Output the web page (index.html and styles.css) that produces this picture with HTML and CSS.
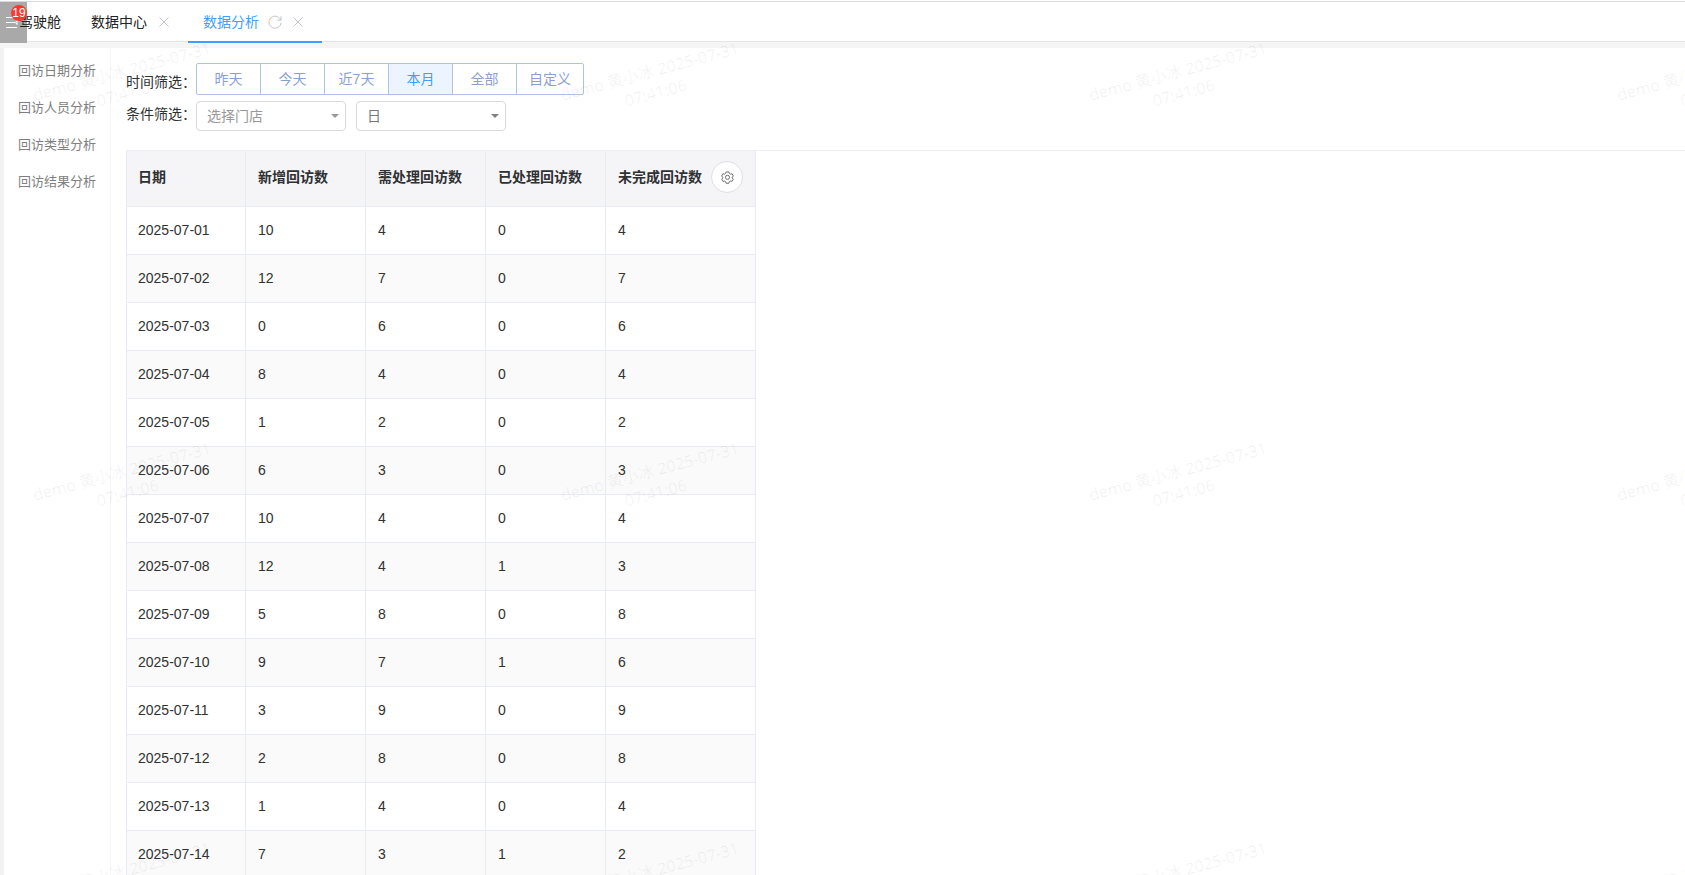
FILE: index.html
```
<!DOCTYPE html>
<html lang="zh-CN">
<head>
<meta charset="utf-8">
<title>数据分析</title>
<link rel="stylesheet" href="styles.css">
</head>
<body>
<header class="topbar">
  <button class="menu-btn" type="button" aria-label="菜单">
    <svg width="12" height="13" viewBox="0 0 12 13"><path d="M0 1.500h11M0 6.500h9M0 11.500h11M11 4.500v4L9.500 6.500z"/></svg>
    <span class="badge">19</span>
  </button>
  <nav class="tabs">
    <div class="tab tab-home"><a class="tab-link" href="#home">驾驶舱</a></div>
    <div class="tab">
      <a class="tab-link" href="#center">数据中心</a>
      <button class="tab-btn" type="button" aria-label="关闭数据中心"><svg width="10" height="10" viewBox="0 0 10 10"><path d="M.5.5l9 9M9.500.5l-9 9"/></svg></button>
    </div>
    <div class="tab tab-active">
      <a class="tab-link" href="#analysis">数据分析</a>
      <button class="tab-btn tab-refresh" type="button" aria-label="刷新"><svg width="14" height="14" viewBox="0 0 14 14"><path d="M12.600 5A6 6 0 1 0 13 7.600M13 1.200v4H9.200"/></svg></button>
      <button class="tab-btn" type="button" aria-label="关闭数据分析"><svg width="10" height="10" viewBox="0 0 10 10"><path d="M.5.5l9 9M9.500.5l-9 9"/></svg></button>
    </div>
  </nav>
</header>
<div class="layout">
  <nav class="sidebar">
    <a class="side-link" href="#date">回访日期分析</a>
    <a class="side-link" href="#staff">回访人员分析</a>
    <a class="side-link" href="#type">回访类型分析</a>
    <a class="side-link" href="#result">回访结果分析</a>
  </nav>
  <main class="content">
    <div class="filters">
      <div class="filter-row">
        <span class="filter-label" id="time-label">时间筛选：</span>
        <div class="range" role="group" aria-labelledby="time-label">
          <button class="range-btn" type="button">昨天</button>
          <button class="range-btn" type="button">今天</button>
          <button class="range-btn" type="button">近7天</button>
          <button class="range-btn range-on" type="button">本月</button>
          <button class="range-btn" type="button">全部</button>
          <button class="range-btn" type="button">自定义</button>
        </div>
      </div>
      <div class="filter-row filter-row-top">
        <label class="filter-label" for="store">条件筛选：</label>
        <div class="selects">
          <div class="select-box">
            <select class="select select-empty" id="store"><option>选择门店</option></select>
            <svg class="caret" width="8" height="4" viewBox="0 0 8 4"><path d="M0 0h8L4 4z"/></svg>
          </div>
          <div class="select-box">
            <select class="select" aria-label="统计周期"><option>日</option></select>
            <svg class="caret caret-dark" width="8" height="4" viewBox="0 0 8 4"><path d="M0 0h8L4 4z"/></svg>
          </div>
        </div>
      </div>
    </div>
    <div class="table-wrap">
      <table class="table">
        <colgroup><col class="col"><col class="col"><col class="col"><col class="col"><col class="col-last"></colgroup>
        <thead>
          <tr><th>日期</th><th>新增回访数</th><th>需处理回访数</th><th>已处理回访数</th><th><div class="th-last">未完成回访数
            <button class="gear" type="button" aria-label="列设置"><svg width="13" height="13" viewBox="0 0 14 14"><path d="M5.500 1h3l.5 1.700 1.200.7 1.700-.5 1.400 2.500-1.200 1.200v1l1.200 1.200-1.400 2.400-1.700-.4-1.200.7-.5 1.700h-3l-.5-1.700-1.200-.7-1.700.4L.7 8.800l1.200-1.200v-1L.7 5.400l1.400-2.500 1.700.5L5 2.700z"/><circle cx="7" cy="6.800" r="2.200"/></svg></button></div></th></tr>
        </thead>
        <tbody>
          <tr><td>2025-07-01</td><td>10</td><td>4</td><td>0</td><td>4</td></tr>
          <tr><td>2025-07-02</td><td>12</td><td>7</td><td>0</td><td>7</td></tr>
          <tr><td>2025-07-03</td><td>0</td><td>6</td><td>0</td><td>6</td></tr>
          <tr><td>2025-07-04</td><td>8</td><td>4</td><td>0</td><td>4</td></tr>
          <tr><td>2025-07-05</td><td>1</td><td>2</td><td>0</td><td>2</td></tr>
          <tr><td>2025-07-06</td><td>6</td><td>3</td><td>0</td><td>3</td></tr>
          <tr><td>2025-07-07</td><td>10</td><td>4</td><td>0</td><td>4</td></tr>
          <tr><td>2025-07-08</td><td>12</td><td>4</td><td>1</td><td>3</td></tr>
          <tr><td>2025-07-09</td><td>5</td><td>8</td><td>0</td><td>8</td></tr>
          <tr><td>2025-07-10</td><td>9</td><td>7</td><td>1</td><td>6</td></tr>
          <tr><td>2025-07-11</td><td>3</td><td>9</td><td>0</td><td>9</td></tr>
          <tr><td>2025-07-12</td><td>2</td><td>8</td><td>0</td><td>8</td></tr>
          <tr><td>2025-07-13</td><td>1</td><td>4</td><td>0</td><td>4</td></tr>
          <tr><td>2025-07-14</td><td>7</td><td>3</td><td>1</td><td>2</td></tr>
        </tbody>
      </table>
    </div>
  </main>
</div>
<div class="watermark" aria-hidden="true">
  <div class="marks">
    <span class="mark">demo 黄小冰 2025-07-31<br>07:41:06</span><span class="mark">demo 黄小冰 2025-07-31<br>07:41:06</span><span class="mark">demo 黄小冰 2025-07-31<br>07:41:06</span><span class="mark">demo 黄小冰 2025-07-31<br>07:41:06</span>
    <span class="mark">demo 黄小冰 2025-07-31<br>07:41:06</span><span class="mark">demo 黄小冰 2025-07-31<br>07:41:06</span><span class="mark">demo 黄小冰 2025-07-31<br>07:41:06</span><span class="mark">demo 黄小冰 2025-07-31<br>07:41:06</span>
    <span class="mark">demo 黄小冰 2025-07-31<br>07:41:06</span><span class="mark">demo 黄小冰 2025-07-31<br>07:41:06</span><span class="mark">demo 黄小冰 2025-07-31<br>07:41:06</span><span class="mark">demo 黄小冰 2025-07-31<br>07:41:06</span>
  </div>
</div>
</body>
</html>
```
FILE: styles.css
```
* { box-sizing: border-box; }
body {
  margin: 0;
  height: 100vh;
  overflow: hidden;
  display: flex;
  flex-direction: column;
  background: #fff;
  color: #303133;
  font: 14px/20px "Liberation Sans", "Noto Sans CJK SC", sans-serif;
}
a { color: inherit; text-decoration: none; }
button, select { font: inherit; color: inherit; margin: 0; }
svg { display: block; fill: none; stroke: currentColor; }

.topbar {
  position: relative;
  flex: none;
  padding-top: 1px;
  background: #fff;
  border-bottom: 6px solid #f5f5f5;
}
.tabs {
  display: flex;
  height: 41px;
  border-top: 1px solid #d9dadb;
  border-bottom: 1px solid #e6e6e6;
}
.tab {
  display: flex;
  align-items: center;
  height: 39px;
  padding: 0 19px 0 15px;
  gap: 12px;
  color: #222;
}
.tab-home { padding: 0 15px 0 19px; }
.tab-home .tab-link { position: relative; z-index: 1; }
.tab-active {
  height: 41px;
  color: #409eff;
  gap: 9px;
  border-bottom: 2px solid #409eff;
}
.tab-btn {
  padding: 0;
  border: 0;
  background: none;
  color: #c0c4cc;
}
.tab-refresh { margin-right: 2px; }
.menu-btn {
  position: absolute;
  left: 0;
  top: 2px;
  width: 27px;
  height: 41px;
  padding: 0 0 0 6px;
  border: 0;
  background: #a9a9a9;
  color: #fff;
}
.badge {
  position: absolute;
  z-index: 2;
  left: 11px;
  top: 3px;
  width: 16px;
  height: 16px;
  border-radius: 8px;
  background: #fa3a30;
  font-size: 12px;
  line-height: 16px;
  text-align: center;
}

.layout {
  flex: 1;
  min-height: 0;
  display: flex;
  border-left: 4px solid #f2f2f2;
}
.sidebar {
  flex: none;
  width: 107px;
  padding: 4px 14px;
  border-right: 1px solid #f5f5f5;
}
.side-link {
  display: block;
  font-size: 13px;
  line-height: 37px;
  color: #7f7f7f;
  white-space: nowrap;
}
.content { flex: 1; min-width: 0; overflow: hidden; }
.filters {
  display: flex;
  flex-direction: column;
  gap: 6px;
  padding: 15px 15px 19px;
}
.filter-row { display: flex; align-items: flex-end; }
.filter-row-top { align-items: flex-start; }
.filter-label { width: 70px; line-height: 26px; white-space: nowrap; }
.range { display: flex; }
.range-btn {
  min-width: 65px;
  height: 32px;
  padding: 0 11px;
  border: 1px solid #afc1e6;
  background: #fff;
  color: #8aa0d2;
}
.range-btn:last-child { min-width: 68px; }
.range-btn + .range-btn { margin-left: -1px; }
.range-btn:first-child { border-radius: 2px 0 0 2px; }
.range-btn:last-child { border-radius: 0 2px 2px 0; }
.range-on { background: #ecf5ff; color: #409eff; }
.selects { display: flex; gap: 10px; }
.select-box { position: relative; width: 150px; }
.select {
  display: block;
  appearance: none;
  width: 100%;
  height: 30px;
  padding: 0 24px 0 10px;
  border: 1px solid #d9d9d9;
  border-radius: 4px;
  background: #fff;
  color: #777;
}
.select-empty { color: #999; }
.caret {
  position: absolute;
  right: 7px;
  top: 13px;
  fill: #999;
  stroke: none;
}
.caret-dark { fill: #808080; }

.table-wrap { margin-left: 15px; border-top: 1px solid #ebeef5; }
.table {
  width: 630px;
  table-layout: fixed;
  border-collapse: separate;
  border-spacing: 0;
  border-left: 1px solid #e9ebf4;
}
.col { width: 120px; }
.col:first-child { width: 119px; }
th, td {
  padding: 0 12px;
  border-right: 1px solid #e9ebf4;
  border-bottom: 1px solid #e9ebf4;
  text-align: left;
}
td { height: 48px; padding-bottom: 2px; }
td:first-child, th:first-child { padding-left: 11px; }
th {
  height: 56px;
  padding-bottom: 3px;
  background: #f5f5f8;
  white-space: nowrap;
}
tbody tr:nth-child(even) { background: #fafafa; }
.th-last { display: flex; align-items: center; gap: 9px; }
.gear {
  display: grid;
  place-items: center;
  width: 32px;
  height: 32px;
  padding: 0;
  border: 1px solid #dcdfe6;
  border-radius: 50%;
  background: #fff;
  color: #666;
}

.watermark {
  position: absolute;
  inset: 0;
  overflow: hidden;
  pointer-events: none;
}
.marks {
  display: grid;
  grid-template-columns: repeat(4, 528px);
  grid-auto-rows: 400px;
  place-items: center;
  margin: -118px 0 0 -139px;
}
.mark {
  transform: rotate(-15deg);
  font: 16px/22px "Noto Sans", "Noto Sans CJK SC", sans-serif;
  text-align: center;
  white-space: nowrap;
  color: rgba(0, 0, 0, 0.06);
}
```
